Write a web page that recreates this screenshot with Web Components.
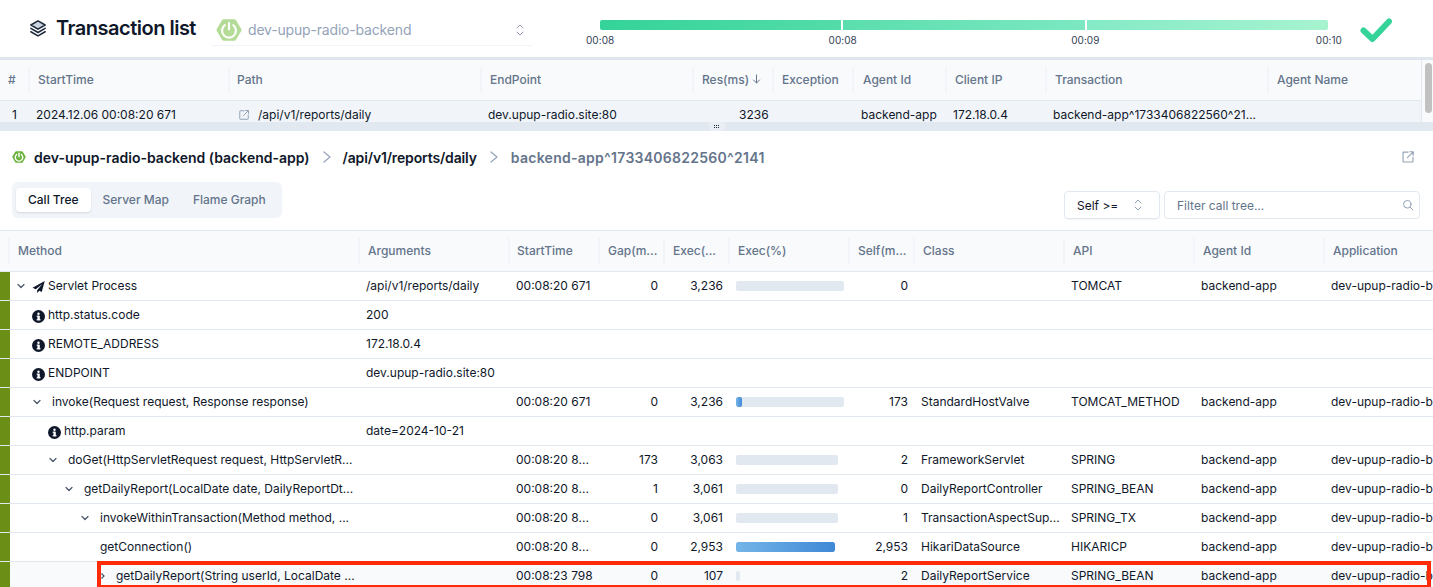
<!DOCTYPE html>
<html>
<head>
<meta charset="utf-8">
<style>
  html, body { margin: 0; height: 100%; background: #fff; }
  body { font-family: Inter, "Noto Sans", sans-serif; font-size: 12px; color: #0f172a; overflow: hidden; }
  tx-page { width: 1433px; height: 587px; }
</style>
</head>
<body>
<tx-page></tx-page>
<script>
// ---- iconos compartidos ----
const SPRING = (size, bg, fg) => `
  <svg width="${size}" height="${size}" viewBox="0 0 24 24">
    <path d="M7.2 2h9.6a2 2 0 0 1 1.7 1l4.8 8a2 2 0 0 1 0 2l-4.8 8a2 2 0 0 1-1.7 1H7.2a2 2 0 0 1-1.7-1L.7 13a2 2 0 0 1 0-2l4.8-8a2 2 0 0 1 1.7-1z" fill="${bg}"/>
    <path d="M8 7.6a6.4 6.4 0 1 0 8 0" fill="none" stroke="${fg}" stroke-width="2" stroke-linecap="round"/>
    <path d="M12 5.5v6" stroke="${fg}" stroke-width="2" stroke-linecap="round"/>
  </svg>`;
const EXTERNAL = (size, color) => `
  <svg width="${size}" height="${size}" viewBox="0 0 24 24" fill="none" stroke="${color}" stroke-width="2" stroke-linecap="round" stroke-linejoin="round">
    <path d="M12 3.5H4.5a1 1 0 0 0-1 1v15a1 1 0 0 0 1 1h15a1 1 0 0 0 1-1V12"/>
    <path d="M11 13 20.5 3.5M15 3h6v6"/>
  </svg>`;
const UPDOWN = `
  <svg width="10" height="14" viewBox="0 0 10 14" fill="none" stroke="#94a3b8" stroke-width="1" stroke-linecap="round" stroke-linejoin="round">
    <path d="M2 5l3-3 3 3M2 9l3 3 3-3"/>
  </svg>`;

class TxHeader extends HTMLElement {
  constructor() {
    super();
    this.attachShadow({ mode: "open" });
  }
  connectedCallback() {
    this.shadowRoot.innerHTML = `
      <style>
        :host { display: flex; align-items: flex-start; height: 57px; background: #fff; box-sizing: border-box; padding-left: 29px; }
        .title { display: flex; align-items: center; gap: 9px; margin-top: 18px; height: 20px; width: 183px; flex: none; }
        h1 { margin: 0; font-size: 20px; font-weight: 600; letter-spacing: -0.5px; color: #0f172a; white-space: nowrap; }
        .select { width: 320px; height: 32px; margin-top: 14px; box-sizing: border-box; flex: none; display: flex; align-items: center;
          gap: 6px; border-bottom: 1px solid #f1f5f9; padding: 0 7px 0 4px; color: #94a3b8; font-size: 14px; letter-spacing: -0.18px; white-space: nowrap; }
        .select span { flex: 1; }
        tx-timeline { margin-left: 68px; }
      </style>
      <div class="title">
        <svg width="18" height="18" viewBox="0 0 24 24" fill="none" stroke="#1e293b" stroke-width="2" stroke-linejoin="round" stroke-linecap="round">
          <path d="M12 2.5 21.5 8 12 13.5 2.5 8z" fill="#cbd5e1"/>
          <path d="M2.5 12.5 12 18l9.5-5.5M2.5 17 12 22.5 21.5 17"/>
        </svg>
        <h1>Transaction list</h1>
      </div>
      <div class="select">
        ${SPRING(26, "#b4dc98", "#fff")}
        <span>dev-upup-radio-backend</span>
        ${UPDOWN}
      </div>
      <tx-timeline></tx-timeline>`;
  }
}

class TxTimeline extends HTMLElement {
  constructor() {
    super();
    this.attachShadow({ mode: "open" });
  }
  connectedCallback() {
    this.shadowRoot.innerHTML = `
      <style>
        :host { display: flex; align-items: flex-start; flex: none; }
        .track { width: 728px; margin-top: 20px; }
        .bar { display: flex; gap: 2px; height: 10px; border-radius: 2px; overflow: hidden;
          background: #fff; }
        .bar i { display: block; flex: 1; }
        .a { background: linear-gradient(90deg, #34d399, #53dca9); }
        .b { background: linear-gradient(90deg, #5bdeae, #7ce8c2); }
        .c { background: linear-gradient(90deg, #84eac6, #a7f3d0); }
        .labels { display: flex; justify-content: space-between; margin: 4px -14px 0 -14px; font-size: 10px; line-height: 12px; color: #334155; letter-spacing: 0.05px; }
        .labels span:nth-child(2) { margin-left: -2px; }
        .labels span:nth-child(3) { margin-left: -2px; }
        svg { margin: 17px 0 0 32px; }
      </style>
      <div class="track">
        <div class="bar"><i class="a"></i><i class="b"></i><i class="c"></i></div>
        <div class="labels"><span>00:08</span><span>00:08</span><span>00:09</span><span>00:10</span></div>
      </div>
      <svg width="32" height="26" viewBox="0 0 32 26" fill="none" stroke="#34d399" stroke-width="6" stroke-linecap="round" stroke-linejoin="round">
        <path d="M3.5 13.5l9 8.5L29 4.5"/>
      </svg>`;
  }
}

// Tabla genérica: columnas y filas vienen por propiedades
class HeadCells extends HTMLElement {
  constructor() {
    super();
    this.attachShadow({ mode: "open" });
  }
  set columns(cols) {
    this.shadowRoot.innerHTML = `
      <style>
        :host { display: flex; box-sizing: border-box; background: #f8fafc; color: #64748b; font-weight: 500; font-size: 12px; }
        div { flex: none; display: flex; align-items: center; box-sizing: border-box; height: 100%; padding-left: 9px; padding-bottom: 2px; white-space: nowrap; position: relative; }
        div::before { content: ""; position: absolute; left: -1px; top: 7px; bottom: 7px; width: 2px; background: #f1f5f9; }
        div.nosep::before { display: none; }
        div svg { margin-left: 3px; }
      </style>
      ${cols.map(c => `<div class="${c.nosep ? "nosep" : ""}" style="width:${c.w}px;${c.pad != null ? `padding-left:${c.pad}px` : ""}">${c.label}</div>`).join("")}`;
  }
}

class TxList extends HTMLElement {
  constructor() {
    super();
    this.attachShadow({ mode: "open" });
  }
  connectedCallback() {
    const cols = [
      { w: 29, label: "#", nosep: true, pad: 8 },
      { w: 200, label: "StartTime" },
      { w: 252, label: "Path", pad: 8 },
      { w: 212, label: "EndPoint" },
      { w: 80, label: 'Res(ms)<svg width="9" height="10" viewBox="0 0 9 10" fill="none" stroke="#64748b" stroke-linecap="round" stroke-linejoin="round"><path d="M4.5 1v8M1.5 6l3 3 3-3"/></svg>' },
      { w: 80, label: "Exception" },
      { w: 93, label: "Agent Id", pad: 10 },
      { w: 100, label: "Client IP" },
      { w: 222, label: "Transaction" },
      { w: 153, label: "Agent Name" },
    ];
    this.shadowRoot.innerHTML = `
      <style>
        :host { display: grid; grid-template-columns: 1421px 12px; height: 65px; overflow: hidden; border-top: 3px solid #e0e6ee; box-sizing: border-box; }
        .main { min-width: 0; }
        head-cells { height: 40px; border-bottom: 1px solid #e2e8f0; box-sizing: content-box; }
        .row { display: flex; align-items: center; height: 21px; background: #f1f5f9; white-space: nowrap; color: #0f172a; font-size: 12px; padding: 3px 0 0; box-sizing: content-box; }
        .row > * { flex: none; box-sizing: border-box; }
        .path { display: flex; align-items: center; gap: 8px; }
        .scroll { background: #f8fafc; border-left: 1px solid #e2e8f0; padding: 3px 0 0 3px; }
        .scroll i { display: block; width: 7px; height: 50px; border-radius: 4px; background: #c1c1c1; }
      </style>
      <div class="main">
        <head-cells></head-cells>
        <div class="row">
          <span style="width:36px;padding-left:12px">1</span>
          <span style="width:202px">2024.12.06 00:08:20 671</span>
          <span class="path" style="width:250px">${EXTERNAL(12, "#94a3b8")}<span>/api/v1/reports/daily</span></span>
          <span style="width:251px">dev.upup-radio.site:80</span>
          <span style="width:122px">3236</span>
          <span style="width:92px">backend-app</span>
          <span style="width:100px">172.18.0.4</span>
          <span style="width:220px">backend-app^1733406822560^21...</span>
        </div>
      </div>
      <div class="scroll"><i></i></div>`;
    this.shadowRoot.querySelector("head-cells").columns = cols;
  }
}

class ResizeHandle extends HTMLElement {
  constructor() {
    super();
    this.attachShadow({ mode: "open" });
  }
  connectedCallback() {
    this.shadowRoot.innerHTML = `
      <style>
        :host { display: flex; justify-content: center; height: 9px; background: #e2e8f0; }
        div { width: 16px; height: 9px; background: #e9eef4; border-radius: 2px; display: grid; grid-template-columns: repeat(3, 1px); grid-auto-rows: 1px; gap: 1px; place-content: center; }
        i { background: #1e293b; }
      </style>
      <div><i></i><i></i><i></i><i></i><i></i><i></i></div>`;
  }
}

class CallHead extends HTMLElement {
  constructor() {
    super();
    this.attachShadow({ mode: "open" });
  }
  connectedCallback() {
    const chev = `<svg width="10" height="14" viewBox="0 0 10 14" fill="none" stroke="#94a3b8" stroke-width="1.2" stroke-linecap="round" stroke-linejoin="round"><path d="M2 2l6 5-6 5"/></svg>`;
    this.shadowRoot.innerHTML = `
      <style>
        :host { display: block; height: 100px; box-sizing: border-box; border-bottom: 1px solid #e2e8f0; position: relative; }
        .crumbs { display: flex; align-items: center; height: 20px; padding: 16px 13px 0 12px; font-size: 14px; font-weight: 600; color: #0f172a; white-space: nowrap; }
        .crumbs svg.logo { margin-right: 8px; }
        .crumbs .sep { margin: 0 12px 0 12px; display: flex; }
        .crumbs .sep.first { margin: 0 11px 0 12px; }
        .crumbs .api { letter-spacing: -0.15px; }
        .crumbs .last { color: #64748b; letter-spacing: 0.27px; }
        .crumbs .ext { margin-left: auto; display: flex; margin-right: 5px; }
        .tools { display: flex; align-items: flex-start; margin-top: 15px; padding: 0 13px 0 12px; }
        .tabs { display: flex; align-items: center; height: 36px; box-sizing: border-box; padding: 0 4px; background: #f1f5f9; border-radius: 6px; width: 270px; }
        .tabs span { color: #64748b; font-weight: 500; padding: 0 12px; line-height: 24px; white-space: nowrap; }
        .tabs .on { background: #fff; color: #0f172a; border-radius: 4px; box-shadow: 0 1px 2px rgba(15,23,42,.12); }
        .grow { flex: 1; }
        .self { width: 96px; height: 28px; margin-top: 9px; box-sizing: border-box; border: 1px solid #e2e8f0; border-radius: 4px; display: flex; align-items: center; justify-content: space-between; padding: 0 16px 0 12px; box-shadow: 0 1px 1px rgba(15,23,42,.04); }
        .filter { width: 256px; height: 28px; margin: 9px 0 0 4px; box-sizing: border-box; border: 1px solid #e2e8f0; border-radius: 4px; display: flex; align-items: center; justify-content: space-between; padding: 0 5px 0 12px; color: #64748b; font-size: 12px; }
      </style>
      <div class="crumbs">
        <svg class="logo" width="14" height="14" viewBox="0 0 24 24">
          <path d="M7.2 2h9.6a2 2 0 0 1 1.7 1l4.8 8a2 2 0 0 1 0 2l-4.8 8a2 2 0 0 1-1.7 1H7.2a2 2 0 0 1-1.7-1L.7 13a2 2 0 0 1 0-2l4.8-8a2 2 0 0 1 1.7-1z" fill="#6db33f"/>
          <path d="M8 7.6a6.4 6.4 0 1 0 8 0" fill="none" stroke="#fff" stroke-width="2.4" stroke-linecap="round"/>
          <path d="M12 5.5v6" stroke="#fff" stroke-width="2.4" stroke-linecap="round"/>
        </svg>
        <span>dev-upup-radio-backend (backend-app)</span>
        <span class="sep first">${chev}</span>
        <span class="api">/api/v1/reports/daily</span>
        <span class="sep">${chev}</span>
        <span class="last">backend-app^1733406822560^2141</span>
        <span class="ext">${EXTERNAL(14, "#94a3b8")}</span>
      </div>
      <div class="tools">
        <div class="tabs"><span class="on">Call Tree</span><span>Server Map</span><span>Flame Graph</span></div>
        <div class="grow"></div>
        <div class="self"><span>Self &gt;=</span>${UPDOWN}</div>
        <div class="filter"><span>Filter call tree...</span>
          <svg width="12" height="12" viewBox="0 0 24 24" fill="none" stroke="#94a3b8" stroke-width="2" stroke-linecap="round"><circle cx="10.5" cy="10.5" r="7.5"/><path d="M16 16l5.5 5.5"/></svg>
        </div>
      </div>`;
  }
}

const COLS = [350, 150, 90, 65, 65, 120, 65, 150, 130, 130, 130];

class TreeRow extends HTMLElement {
  constructor() {
    super();
    this.attachShadow({ mode: "open" });
  }
  set data(r) {
    const info = `<svg class="ico" width="13" height="13" viewBox="0 0 24 24"><circle cx="12" cy="12" r="12" fill="#0f172a"/><rect x="10" y="10.5" width="4.4" height="8.5" fill="#fff"/><rect x="8.6" y="10.5" width="4" height="2" fill="#fff"/><rect x="8.6" y="17" width="7.2" height="2" fill="#fff"/><circle cx="12" cy="6.8" r="2.2" fill="#fff"/></svg>`;
    const plane = `<svg class="ico" width="13" height="14" viewBox="0 0 24 24" fill="#0f172a"><path d="M23.5 1 1 13.5l6 2.8L19 6.5 9.5 18v5l4-4.2 4.5 2.5z"/></svg>`;
    const twist = r.twist === "open"
      ? `<svg class="tw" width="10" height="10" viewBox="0 0 10 10" fill="none" stroke="#475569" stroke-width="1.2" stroke-linecap="round" stroke-linejoin="round"><path d="M2 3.5 5 6.5 8 3.5"/></svg>`
      : r.twist === "closed"
      ? `<svg class="tw" width="10" height="10" viewBox="0 0 10 10" fill="none" stroke="#475569" stroke-width="1.2"><path d="M4.5 2.5 7 5 4.5 7.5"/></svg>`
      : "";
    const pct = r.bar == null ? "" : `<div class="track" style="width:${r.track}px">${r.bar ? `<i style="width:${r.bar}px"></i>` : ""}</div>`;
    const ml = r.icon || !r.twist ? 0 : r.twist === "closed" ? 3 : 4;
    this.shadowRoot.innerHTML = `
      <style>
        :host { display: flex; height: 29px; box-sizing: border-box; border-bottom: 1px solid #e2e8f0; background: ${r.hl ? "#f8fafc" : "#fff"}; white-space: nowrap; color: #0f172a; font-size: 12px; }
        .mark { flex: none; width: 10px; background: #6b8e17; }
        div.c { flex: none; box-sizing: border-box; display: flex; align-items: center; padding: 0 0 2px 6px; overflow: hidden; }
        div.n { justify-content: flex-end; padding: 0 7px 2px 0; }
        .method { gap: 3px; }
        .method .t { overflow: hidden; text-overflow: ellipsis; }
        .ico { flex: none; position: relative; top: 2px; }
        .tw { flex: none; margin-right: 3px; position: relative; top: 1px; }
        .track { height: 10px; background: #e2e8f0; border-radius: 2px; overflow: hidden; position: relative; top: 1px; }
        .track i { display: block; height: 100%; border-radius: 2px; background: linear-gradient(90deg, #74b5e8, #3f88d6); }
      </style>
      <div class="mark"></div>
      <div class="c method" style="width:350px;padding-left:${r.indent}px">${twist}${r.icon === "info" ? info : r.icon === "plane" ? plane : ""}<span class="t" style="margin-left:${ml}px">${r.m}</span></div>
      <div class="c" style="width:150px">${r.args || ""}</div>
      <div class="c" style="width:90px">${r.start || ""}</div>
      <div class="c n" style="width:65px">${r.gap ?? ""}</div>
      <div class="c n" style="width:65px">${r.exec ?? ""}</div>
      <div class="c" style="width:120px">${pct}</div>
      <div class="c n" style="width:65px">${r.self ?? ""}</div>
      <div class="c" style="width:150px">${r.cls || ""}</div>
      <div class="c" style="width:130px">${r.api || ""}</div>
      <div class="c" style="width:130px">${r.agent || ""}</div>
      <div class="c" style="width:108px;padding-right:0">${r.agent ? "dev-upup-radio-backend" : ""}</div>`;
  }
}

class CallTree extends HTMLElement {
  constructor() {
    super();
    this.attachShadow({ mode: "open" });
  }
  connectedCallback() {
    const rows = [
      { indent: 6, twist: "open", icon: "plane", m: "Servlet Process", args: "/api/v1/reports/daily", start: "00:08:20 671", gap: 0, exec: "3,236", bar: 0, track: 108, self: 0, api: "TOMCAT", agent: "backend-app" },
      { indent: 22, icon: "info", m: "http.status.code", args: "200" },
      { indent: 22, icon: "info", m: "REMOTE_ADDRESS", args: "172.18.0.4" },
      { indent: 22, icon: "info", m: "ENDPOINT", args: "dev.upup-radio.site:80" },
      { indent: 22, twist: "open", m: "invoke(Request request, Response response)", start: "00:08:20 671", gap: 0, exec: "3,236", bar: 6, track: 108, self: 173, cls: "StandardHostValve", api: "TOMCAT_METHOD", agent: "backend-app" },
      { indent: 38, icon: "info", m: "http.param", args: "date=2024-10-21" },
      { indent: 38, twist: "open", m: "doGet(HttpServletRequest request, HttpServletR...", start: "00:08:20 8...", gap: 173, exec: "3,063", bar: 0, track: 102, self: 2, cls: "FrameworkServlet", api: "SPRING", agent: "backend-app" },
      { indent: 54, twist: "open", m: "getDailyReport(LocalDate date, DailyReportDt...", start: "00:08:20 8...", gap: 1, exec: "3,061", bar: 0, track: 102, self: 0, cls: "DailyReportController", api: "SPRING_BEAN", agent: "backend-app" },
      { indent: 70, twist: "open", m: "invokeWithinTransaction(Method method, ...", start: "00:08:20 8...", gap: 0, exec: "3,061", bar: 0, track: 102, self: 1, cls: "TransactionAspectSup...", api: "SPRING_TX", agent: "backend-app" },
      { indent: 90, m: "getConnection()", start: "00:08:20 8...", gap: 0, exec: "2,953", bar: 99, track: 99, self: "2,953", cls: "HikariDataSource", api: "HIKARICP", agent: "backend-app" },
      { indent: 87, twist: "closed", hl: true, m: "getDailyReport(String userId, LocalDate ...", start: "00:08:23 798", gap: 0, exec: "107", bar: 0, track: 4, self: 2, cls: "DailyReportService", api: "SPRING_BEAN", agent: "backend-app" },
    ];
    const cols = ["Method", "Arguments", "StartTime", "Gap(m...", "Exec(...", "Exec(%)", "Self(m...", "Class", "API", "Agent Id", "Application"]
      .map((label, i) => ({ label, w: COLS[i], pad: label === "StartTime" ? 8 : undefined }));
    this.shadowRoot.innerHTML = `
      <style>
        :host { display: block; }
        head-cells { height: 40px; padding-left: 9px; border-bottom: 1px solid #e2e8f0; box-sizing: content-box; }
      </style>
      <head-cells></head-cells>
      <div id="rows"></div>`;
    this.shadowRoot.querySelector("head-cells").columns = cols;
    const box = this.shadowRoot.getElementById("rows");
    rows.forEach(r => {
      const el = document.createElement("tree-row");
      el.data = r;
      box.appendChild(el);
    });
  }
}

class TxPage extends HTMLElement {
  constructor() {
    super();
    this.attachShadow({ mode: "open" });
  }
  connectedCallback() {
    this.shadowRoot.innerHTML = `
      <style>
        :host { display: block; position: relative; overflow: hidden; }
        /* recuadro rojo de la captura: va encima de la fila */
        .mark { position: absolute; left: 97px; top: 561px; width: 1334px; height: 26px; box-sizing: border-box; border: 4.5px solid #ff2a08; border-bottom-width: 2px; pointer-events: none; }
      </style>
      <tx-header></tx-header>
      <tx-list></tx-list>
      <resize-handle></resize-handle>
      <call-head></call-head>
      <call-tree></call-tree>
      <div class="mark"></div>`;
  }
}

customElements.define("tx-timeline", TxTimeline);
customElements.define("tx-header", TxHeader);
customElements.define("head-cells", HeadCells);
customElements.define("tx-list", TxList);
customElements.define("resize-handle", ResizeHandle);
customElements.define("call-head", CallHead);
customElements.define("tree-row", TreeRow);
customElements.define("call-tree", CallTree);
customElements.define("tx-page", TxPage);
</script>
</body>
</html>
